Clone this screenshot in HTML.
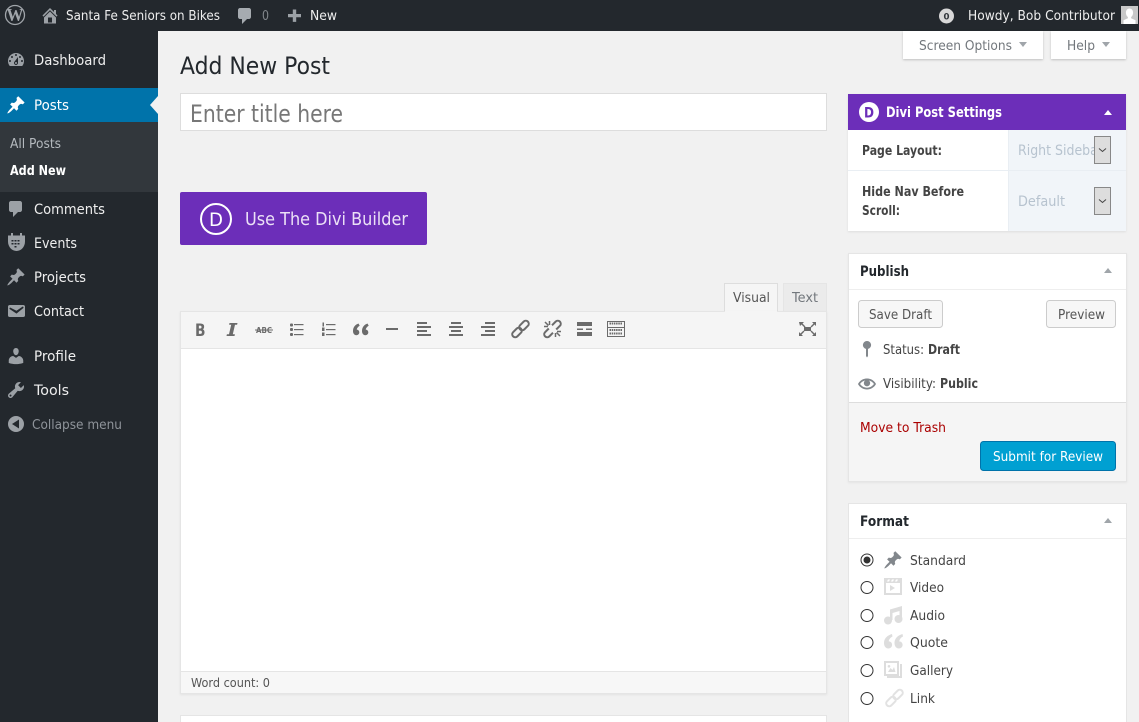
<!DOCTYPE html>
<html lang="en"><head><meta charset="utf-8"><title>Add New Post</title>
<style>
html,body{margin:0;padding:0;width:1139px;height:722px;overflow:hidden;background:#f1f1f1}
svg{display:block;position:absolute;left:0;top:0}
text{font-family:"DejaVu Sans","Liberation Sans",sans-serif;font-size:13px;fill:#444;white-space:pre}
.b{font-weight:bold}
.bar{fill:#eee}
.m{font-size:14px;fill:#eee}
.bt{fill:#555}
.ic{fill:#9ca1a6}
.tb{fill:#6b6b6b}
.fi{fill:#ddd}
.h{font-size:14px;font-weight:bold;fill:#23282d}
.tri{fill:#a0a5aa}
</style></head><body>
<svg width="1139" height="722" viewBox="0 0 1139 722" xmlns="http://www.w3.org/2000/svg">
<defs>
<path id="pin" d="M10.44 3.02l1.82-1.82 6.36 6.35-1.83 1.82c-1.05-.68-2.48-.57-3.41.36l-.75.75c-.92.93-1.04 2.35-.35 3.41l-1.83 1.82-2.41-2.41-2.8 2.79c-.42.42-3.38 2.71-3.8 2.29s1.86-3.39 2.28-3.81l2.79-2.79L4.1 9.36l1.83-1.82c1.05.69 2.48.57 3.4-.36l.75-.75c.93-.92 1.05-2.35.36-3.41z"/>
<path id="cmt" d="M5 2h9c1.1 0 2 .9 2 2v7c0 1.1-.9 2-2 2h-2l-5 5v-5H5c-1.1 0-2-.9-2-2V4c0-1.1.9-2 2-2z"/>
</defs>

<!-- page -->
<rect width="1139" height="722" fill="#f1f1f1"/>
<rect x="0" y="0" width="158" height="722" fill="#23282d"/>
<rect x="0" y="0" width="1139" height="31" fill="#23282d"/>

<!-- admin bar -->
<circle cx="15" cy="15" r="9.500" fill="none" stroke="#a0a5aa" stroke-width="1.300"/>
<text x="6.500" y="21" textLength="17" lengthAdjust="spacingAndGlyphs" style="font-family:'Liberation Serif',serif;font-size:18px;font-weight:bold;fill:#a0a5aa">W</text>
<path class="ic" transform="translate(40,5.500)" d="M16 8.500l1.530 1.530-1.060 1.060L10 4.620l-6.470 6.470-1.060-1.060L10 2.500l4 4v-2h2v4zm-6-2.460l6 5.990V18H4v-5.970zM12 17v-5H8v5h4z"/>
<text class="bar" x="66" y="20" textLength="154" lengthAdjust="spacingAndGlyphs">Santa Fe Seniors on Bikes</text>
<use href="#cmt" fill="#a6abb0" transform="translate(235,6)"/>
<text x="262" y="20" textLength="7" lengthAdjust="spacingAndGlyphs" style="fill:#82878c">0</text>
<path class="ic" d="M292.800 9.500h3.400v4.500h4.800v3.200h-4.800v4.700h-3.400v-4.700H288v-3.200h4.800z"/>
<text class="bar" x="310" y="20" textLength="27" lengthAdjust="spacingAndGlyphs">New</text>
<circle cx="946.500" cy="16" r="7.500" fill="#d8d8d8"/>
<text class="b" x="943.500" y="19.500" textLength="6" lengthAdjust="spacingAndGlyphs" style="font-size:9px;fill:#32373c">0</text>
<text class="bar" x="968" y="20" textLength="147" lengthAdjust="spacingAndGlyphs">Howdy, Bob Contributor</text>
<rect x="1121" y="6" width="17" height="18" fill="#c8c8c8"/>
<path fill="#fff" d="M1129.500 8.500c2.300 0 3.600 1.900 3.600 4.200 0 1.900-.9 3.600-2 4.300v1.200l4.400 2v3.800h-12v-3.800l4.400-2V17c-1.100-.7-2-2.400-2-4.300 0-2.300 1.300-4.200 3.600-4.200z"/>

<!-- sidebar -->
<rect x="0" y="88" width="158" height="34" fill="#0073aa"/>
<rect x="0" y="122" width="158" height="70" fill="#32373c"/>
<path d="M158 96l-8 9 8 9z" fill="#f1f1f1"/>
<path class="ic" transform="translate(6,50)" d="M3.760 16h12.480c1.100-1.370 1.760-3.110 1.760-5 0-4.420-3.580-8-8-8s-8 3.580-8 8c0 1.890.66 3.630 1.760 5zM10 4c.55 0 1 .45 1 1s-.45 1-1 1-1-.45-1-1 .45-1 1-1zM6 6c.55 0 1 .45 1 1s-.45 1-1 1-1-.45-1-1 .45-1 1-1zm8 0c.55 0 1 .45 1 1s-.45 1-1 1-1-.45-1-1 .45-1 1-1zm-5.370 5.550L12 7v6c0 1.100-.9 2-2 2s-2-.9-2-2c0-.57.24-1.080.63-1.450zM4 10c.55 0 1 .45 1 1s-.45 1-1 1-1-.45-1-1 .45-1 1-1zm12 0c.55 0 1 .45 1 1s-.45 1-1 1-1-.45-1-1 .45-1 1-1zm-5 3c0-.55-.45-1-1-1s-1 .45-1 1 .45 1 1 1 1-.45 1-1z"/>
<use href="#pin" fill="#fff" transform="translate(6,95)"/>
<use href="#cmt" class="ic" transform="translate(6,199)"/>
<g class="ic">
<path fill-rule="evenodd" d="M8 235.500h17v6a8.500 9.500 0 0 1-17 0zM11.500 240v1.500h2V240zm3 0v1.500h2V240zm3 0v1.500h2V240zm-6 3v1.500h2V243zm3 0v1.500h2V243zm3 0v1.500h2V243zm-3 3v1.500h2V246z"/>
<rect x="11" y="233" width="2" height="4"/><rect x="20" y="233" width="2" height="4"/>
</g>
<use href="#pin" class="ic" transform="translate(6,267)"/>
<path class="ic" transform="translate(6,301)" d="M3.870 4h13.250C18.370 4 19 4.590 19 5.790v8.420c0 1.190-.63 1.790-1.880 1.790H3.870c-1.250 0-1.880-.6-1.880-1.790V5.790c0-1.200.63-1.790 1.880-1.790zm6.620 8.600l6.740-5.530c.24-.2.43-.66.13-1.070-.29-.41-.82-.42-1.170-.17l-5.700 3.860L4.800 6.830c-.35-.25-.88-.24-1.170.17-.3.41-.11.87.13 1.070z" fill-rule="evenodd"/>
<path class="ic" transform="translate(6,346)" d="M10 9.250c-2.270 0-2.730-3.440-2.730-3.440C7 4.020 7.820 2 9.970 2c2.160 0 2.980 2.020 2.710 3.810 0 0-.41 3.440-2.680 3.440zm0 2.570L12.720 10c2.390 0 4.520 2.330 4.520 4.530v2.490s-3.650 1.130-7.240 1.130c-3.650 0-7.240-1.130-7.240-1.130v-2.490c0-2.250 1.940-4.480 4.470-4.480z"/>
<path class="ic" transform="translate(6,380)" fill-rule="evenodd" d="M16.680 9.770c-1.340 1.340-3.300 1.670-4.950.99l-5.410 6.520c-.99.99-2.590.99-3.580 0s-.99-2.590 0-3.570l6.520-5.420c-.68-1.650-.35-3.610.99-4.950 1.280-1.280 3.120-1.620 4.720-1.060l-2.890 2.890 2.820 2.820 2.860-2.870c.53 1.580.18 3.390-1.080 4.650zM3.810 16.210c.4.39 1.040.39 1.430 0 .4-.4.4-1.040 0-1.430-.39-.4-1.030-.4-1.430 0-.39.39-.39 1.030 0 1.430z"/>
<path class="ic" fill-rule="evenodd" d="M16 416a8 8 0 1 1 0 16 8 8 0 0 1 0-16zm3 3.500l-7 4.500 7 4.500z"/>
<text class="m" x="34" y="65" textLength="72" lengthAdjust="spacingAndGlyphs">Dashboard</text>
<text class="m" x="34" y="110" textLength="35" lengthAdjust="spacingAndGlyphs" style="fill:#fff">Posts</text>
<text x="10" y="148" textLength="51" lengthAdjust="spacingAndGlyphs" style="fill:#b4b9be">All Posts</text>
<text class="b" x="10" y="175" textLength="56" lengthAdjust="spacingAndGlyphs" style="fill:#fff">Add New</text>
<text class="m" x="34" y="214" textLength="71" lengthAdjust="spacingAndGlyphs">Comments</text>
<text class="m" x="34" y="248" textLength="43" lengthAdjust="spacingAndGlyphs">Events</text>
<text class="m" x="34" y="282" textLength="52" lengthAdjust="spacingAndGlyphs">Projects</text>
<text class="m" x="34" y="316" textLength="50" lengthAdjust="spacingAndGlyphs">Contact</text>
<text class="m" x="34" y="361" textLength="42" lengthAdjust="spacingAndGlyphs">Profile</text>
<text class="m" x="34" y="395" textLength="35" lengthAdjust="spacingAndGlyphs">Tools</text>
<text x="32" y="429" textLength="90" lengthAdjust="spacingAndGlyphs" style="fill:#8f949a">Collapse menu</text>

<!-- screen options -->
<rect x="903" y="31" width="140" height="28" fill="#fff" style="filter:drop-shadow(0 1px 1px rgba(0,0,0,.2))"/>
<rect x="1051" y="31" width="75" height="28" fill="#fff" style="filter:drop-shadow(0 1px 1px rgba(0,0,0,.2))"/>
<text x="919" y="50" textLength="93" lengthAdjust="spacingAndGlyphs" style="fill:#72777c">Screen Options</text>
<path class="tri" d="M1019 42h8l-4 5z"/>
<text x="1067" y="50" textLength="28" lengthAdjust="spacingAndGlyphs" style="fill:#72777c">Help</text>
<path class="tri" d="M1102 42h8l-4 5z"/>

<!-- title -->
<text x="180" y="74" textLength="150" lengthAdjust="spacingAndGlyphs" style="font-size:24px;fill:#23282d">Add New Post</text>
<rect x="180.500" y="93.500" width="646" height="37" fill="#fff" stroke="#ddd"/>
<text x="190" y="122" textLength="153" lengthAdjust="spacingAndGlyphs" style="font-size:24px;fill:#777">Enter title here</text>

<!-- divi button -->
<rect x="180" y="192" width="247" height="53" rx="2" fill="#6c2eb9"/>
<circle cx="216" cy="219" r="15" fill="none" stroke="#fff" stroke-width="2"/>
<text x="209" y="226" textLength="14" lengthAdjust="spacingAndGlyphs" style="font-size:19px;fill:#fff">D</text>
<text x="245" y="225" textLength="163" lengthAdjust="spacingAndGlyphs" style="font-size:18px;fill:#ebe0f6">Use The Divi Builder</text>

<!-- editor -->
<rect x="724.500" y="283.500" width="53" height="29" fill="#f5f5f5" stroke="#ddd"/>
<rect x="783.500" y="283.500" width="43" height="28" fill="#ebebeb" stroke="#e5e5e5"/>
<rect x="180.500" y="311.500" width="646" height="382" fill="#fff" stroke="#e5e5e5" style="filter:drop-shadow(0 1px 1px rgba(0,0,0,.06))"/>
<rect x="181" y="312" width="645" height="36" fill="#f5f5f5"/>
<rect x="725" y="311" width="52" height="2" fill="#f5f5f5"/>
<rect x="181" y="348" width="645" height="1" fill="#e5e5e5"/>
<rect x="181" y="671" width="645" height="22" fill="#f7f7f7"/>
<rect x="181" y="671" width="645" height="1" fill="#e5e5e5"/>
<text x="733" y="302" textLength="37" lengthAdjust="spacingAndGlyphs" style="fill:#555">Visual</text>
<text x="792" y="302" textLength="26" lengthAdjust="spacingAndGlyphs" style="fill:#72777c">Text</text>
<text x="191" y="687" textLength="79" lengthAdjust="spacingAndGlyphs" style="font-size:12.500px;fill:#555">Word count: 0</text>

<!-- toolbar icons -->
<text class="b" x="195" y="336" textLength="10.500" lengthAdjust="spacingAndGlyphs" style="font-size:17px;fill:#6b6b6b">B</text>
<path class="tb" d="M229.500 323h8l-.4 1.700h-2.100l-2.200 9.600h2.100l-.4 1.700h-8l.4-1.700h2.100l2.200-9.600h-2.100z"/>
<text class="b" x="256" y="333" textLength="16" lengthAdjust="spacingAndGlyphs" style="font-size:8px;fill:#6b6b6b">ABC</text>
<rect class="tb" x="255" y="329.500" width="18" height="1"/>
<g class="tb">
<rect x="290" y="323.500" width="3" height="3" rx="1"/><rect x="290" y="328" width="3" height="3" rx="1"/><rect x="290" y="333" width="3" height="3" rx="1"/>
<rect x="294" y="324" width="9.500" height="1.200"/><rect x="294" y="329" width="9.500" height="1.200"/><rect x="294" y="334" width="9.500" height="1.200"/>
<rect x="322.500" y="322.500" width="1.500" height="4"/><rect x="322" y="327.500" width="2.500" height="3.500"/><rect x="322" y="332.500" width="2.500" height="3.500"/>
<rect x="326" y="324" width="9.500" height="1.200"/><rect x="326" y="329" width="9.500" height="1.200"/><rect x="326" y="334" width="9.500" height="1.200"/>
<path d="M358.500 323.500c-3 1-5.500 3.500-5.500 7.500 0 2.500 1.300 4.200 3.300 4.200 1.700 0 3-1.200 3-2.800s-1.100-2.800-2.600-2.800c.3-1.600 1.300-3 3-3.900zM367.500 323.500c-3 1-5.500 3.500-5.500 7.500 0 2.500 1.300 4.200 3.300 4.200 1.700 0 3-1.200 3-2.800s-1.100-2.800-2.600-2.800c.3-1.600 1.300-3 3-3.900z"/>
<rect x="386" y="328" width="12" height="2"/>
<rect x="417" y="322" width="10" height="2"/><rect x="417" y="326" width="14" height="2"/><rect x="417" y="330" width="10" height="2"/><rect x="417" y="334" width="14" height="2"/>
<rect x="451" y="322" width="10" height="2"/><rect x="449" y="326" width="14" height="2"/><rect x="451" y="330" width="10" height="2"/><rect x="449" y="334" width="14" height="2"/>
<rect x="485" y="322" width="10" height="2"/><rect x="481" y="326" width="14" height="2"/><rect x="485" y="330" width="10" height="2"/><rect x="481" y="334" width="14" height="2"/>
<rect x="577" y="322" width="15" height="4"/><rect x="577" y="328.500" width="6" height="1.500"/><rect x="586" y="328.500" width="6" height="1.500"/><rect x="577" y="332" width="15" height="4"/>
<path d="M799 322h5l-1.500 1.500 3 3-1 1-3-3L800 326zM816 322v4l-1.500-1.500-3 3-1-1 3-3L812 322zM799 336v-4l1.500 1.500 3-3 1 1-3 3 1.500 1.500zM816 336h-4l1.500-1.500-3-3 1-1 3 3 1.500-1.500z"/>
<rect x="804" y="327" width="7" height="4"/>
</g>
<g fill="none" stroke="#6b6b6b" stroke-width="2">
<rect x="511.500" y="329.500" width="11" height="6" rx="3" transform="rotate(-45 517 332.500)"/>
<rect x="518.500" y="322.500" width="11" height="6" rx="3" transform="rotate(-45 524 325.500)"/>
<rect x="543.500" y="329.500" width="11" height="6" rx="3" transform="rotate(-45 549 332.500)"/>
<rect x="550.500" y="322.500" width="11" height="6" rx="3" transform="rotate(-45 556 325.500)"/>
<path d="M546 322.500L559 335.500" stroke="#f5f5f5" stroke-width="4.500"/>
<path d="M545 322l3.500 3.500M549.500 321v4M544 326.500h4M560 336l-3.500-3.500M555.500 337v-4M561 331.500h-4" stroke-width="1.500"/>
</g>
<g>
<rect x="607.500" y="321.500" width="17" height="15" fill="none" stroke="#6b6b6b"/>
<rect x="607" y="327" width="18" height="1" fill="#6b6b6b"/>
<path d="M609.500 323.500h13M609.500 330h13M609.500 333.500h13" stroke="#6b6b6b" stroke-width="2" stroke-dasharray="1.500 .7" fill="none"/>
</g>

<!-- next box -->
<rect x="180.500" y="715.500" width="646" height="20" fill="#fff" stroke="#e5e5e5"/>

<!-- divi settings -->
<rect x="848" y="94" width="278" height="137" fill="#fff" style="filter:drop-shadow(0 1px 1px rgba(0,0,0,.08))"/>
<rect x="848" y="94" width="278" height="36" fill="#6c2eb9"/>
<circle cx="869" cy="112" r="10" fill="#fff"/>
<text class="b" x="864" y="117.500" textLength="10" lengthAdjust="spacingAndGlyphs" style="font-size:14px;fill:#6c2eb9">D</text>
<text class="b" x="886" y="117" textLength="116" lengthAdjust="spacingAndGlyphs" style="font-size:14px;fill:#fff">Divi Post Settings</text>
<path d="M1104 115l4-5 4 5z" fill="#fff"/>
<rect x="1009" y="130" width="117" height="101" fill="#f1f5f9"/>
<rect x="1008" y="130" width="1" height="101" fill="#e9eef3"/>
<rect x="848" y="170" width="278" height="1" fill="#e9eef3"/>
<text class="b" x="862" y="155" textLength="80" lengthAdjust="spacingAndGlyphs" style="fill:#444">Page Layout:</text>
<text class="b" x="862" y="196" textLength="102" lengthAdjust="spacingAndGlyphs" style="fill:#444">Hide Nav Before</text>
<text class="b" x="862" y="215" textLength="38" lengthAdjust="spacingAndGlyphs" style="fill:#444">Scroll:</text>
<text x="1018" y="155" textLength="85" lengthAdjust="spacingAndGlyphs" style="font-size:14px;fill:#b7c3cf">Right Sidebar</text>
<rect x="1094.500" y="136.500" width="16" height="27" fill="#ddd" stroke="#888"/>
<path d="M1099 148.500l3.500 3 3.500-3" fill="none" stroke="#444"/>
<text x="1018" y="206" textLength="47" lengthAdjust="spacingAndGlyphs" style="font-size:14px;fill:#b7c3cf">Default</text>
<rect x="1094.500" y="187.500" width="16" height="27" fill="#ddd" stroke="#888"/>
<path d="M1099 199.500l3.500 3 3.500-3" fill="none" stroke="#444"/>

<!-- publish -->
<rect x="848.500" y="253.500" width="278" height="228" fill="#fff" stroke="#e5e5e5" style="filter:drop-shadow(0 1px 1px rgba(0,0,0,.05))"/>
<rect x="849" y="289" width="277" height="1" fill="#eee"/>
<text class="h" x="860" y="276" textLength="49" lengthAdjust="spacingAndGlyphs">Publish</text>
<path class="tri" d="M1104 273l4-5 4 5z"/>
<rect x="858.500" y="300.500" width="84" height="27" rx="3" fill="#f7f7f7" stroke="#ccc"/>
<text class="bt" x="869" y="319" textLength="63" lengthAdjust="spacingAndGlyphs">Save Draft</text>
<rect x="1046.500" y="300.500" width="69" height="27" rx="3" fill="#f7f7f7" stroke="#ccc"/>
<text class="bt" x="1058" y="319" textLength="47" lengthAdjust="spacingAndGlyphs">Preview</text>
<path fill="#82878c" d="M867 341a4 4 0 0 1 1 7.900V356l-1 1.500-1-1.500v-7.100A4 4 0 0 1 867 341z"/>
<text x="883" y="354" textLength="41" lengthAdjust="spacingAndGlyphs">Status:</text>
<text class="b" x="928" y="354" textLength="32" lengthAdjust="spacingAndGlyphs">Draft</text>
<path fill="#82878c" transform="translate(858,375) scale(.9)" d="M19.700 9.400C17.700 6 14 3.900 10 3.900S2.300 6 .3 9.400L0 10l.3.6c2 3.400 5.700 5.500 9.700 5.500s7.700-2.100 9.700-5.500l.3-.6-.3-.6zM10 14.100c-3.100 0-6-1.600-7.700-4.100C3.600 8 5.700 6.600 8 6.100c-.9.6-1.500 1.700-1.500 2.900 0 1.900 1.600 3.500 3.500 3.500s3.500-1.600 3.500-3.500c0-1.200-.6-2.300-1.500-2.900 2.300.5 4.400 1.900 5.700 3.900-1.700 2.500-4.600 4.100-7.700 4.100z"/>
<text x="883" y="388" textLength="53" lengthAdjust="spacingAndGlyphs">Visibility:</text>
<text class="b" x="940" y="388" textLength="38" lengthAdjust="spacingAndGlyphs">Public</text>
<rect x="849" y="403" width="277" height="78" fill="#f5f5f5"/>
<rect x="849" y="402" width="277" height="1" fill="#ddd"/>
<text x="860" y="432" textLength="86" lengthAdjust="spacingAndGlyphs" style="fill:#a00">Move to Trash</text>
<rect x="980.500" y="441.500" width="135" height="29" rx="3" fill="#00a0d2" stroke="#0073aa"/>
<text x="993" y="461" textLength="110" lengthAdjust="spacingAndGlyphs" style="fill:#fff">Submit for Review</text>

<!-- format -->
<rect x="848.500" y="503.500" width="278" height="230" fill="#fff" stroke="#e5e5e5"/>
<rect x="849" y="538" width="277" height="1" fill="#eee"/>
<text class="h" x="860" y="526" textLength="49" lengthAdjust="spacingAndGlyphs">Format</text>
<path class="tri" d="M1104 523l4-5 4 5z"/>
<g fill="#fff" stroke="#333" stroke-width="1">
<circle cx="867" cy="560" r="6"/><circle cx="867" cy="587.500" r="6"/><circle cx="867" cy="615.500" r="6"/><circle cx="867" cy="642.500" r="6"/><circle cx="867" cy="670.500" r="6"/><circle cx="867" cy="698.500" r="6"/>
</g>
<circle cx="867" cy="560" r="3.500" fill="#333"/>
<use href="#pin" fill="#82878c" transform="translate(883,550)"/>
<path class="fi" fill-rule="evenodd" d="M884 578h18v17h-18zm2 5v10h14v-10zm2-3.500l-1 2h2l1-2zm4 0l-1 2h2l1-2zm4 0l-1 2h2l1-2zm-6 5.500v6l5-3z"/>
<g class="fi">
<circle cx="888" cy="620.500" r="4"/><circle cx="898.500" cy="619" r="4"/>
<path d="M890 620v-10.500l12-3.500v13h-2.500v-8l-7 2v7z"/>
</g>
<path class="fi" d="M892 634c-4 1.200-8 3.800-8 9 0 3.500 2 5.500 4.300 5.500 2.200 0 3.800-1.500 3.800-3.600s-1.500-3.500-3.400-3.500c.3-2 1.600-3.900 3.800-4.900zM902.500 634c-4 1.200-8 3.800-8 9 0 3.500 2 5.500 4.300 5.500 2.200 0 3.800-1.500 3.800-3.600s-1.500-3.500-3.400-3.500c.3-2 1.600-3.900 3.800-4.900z"/>
<path class="fi" fill-rule="evenodd" d="M884 661h15v15h-15zm2 2v11h11v-11zm2 9l2.500-4 2 2 1.500-3 1.500 5zm1-7a1.300 1.300 0 1 0 0 2.600 1.300 1.300 0 0 0 0-2.600zM900 664h2v14h-15v-2h13z"/>
<g fill="none" stroke="#e2e2e2" stroke-width="2">
<rect x="885.500" y="698.500" width="11" height="6" rx="3" transform="rotate(-45 891 701.500)"/>
<rect x="892.500" y="691.500" width="11" height="6" rx="3" transform="rotate(-45 898 694.500)"/>
</g>
<text x="910" y="565" textLength="56" lengthAdjust="spacingAndGlyphs">Standard</text>
<text x="910" y="592" textLength="34" lengthAdjust="spacingAndGlyphs">Video</text>
<text x="910" y="620" textLength="35" lengthAdjust="spacingAndGlyphs">Audio</text>
<text x="910" y="647" textLength="38" lengthAdjust="spacingAndGlyphs">Quote</text>
<text x="910" y="675" textLength="43" lengthAdjust="spacingAndGlyphs">Gallery</text>
<text x="910" y="703" textLength="25" lengthAdjust="spacingAndGlyphs">Link</text>
</svg>
</body></html>
